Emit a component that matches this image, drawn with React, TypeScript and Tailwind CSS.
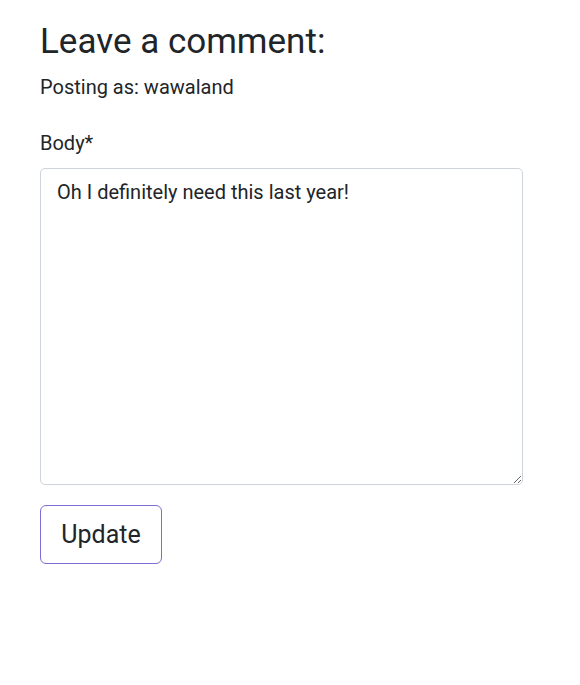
export default function App() {
  return (
    <div className="min-h-screen bg-white px-10 pt-[21px] font-['Roboto',sans-serif] text-[#212529]">
      <h2 className="text-[35px] leading-[1.2] font-normal">Leave a comment:</h2>
      <p className="mt-[9px] text-[20px] leading-[1.5]">Posting as: wawaland</p>

      <form className="mt-[26px] w-[483px]">
        <label className="block text-[20px] leading-[1.5]">Body*</label>
        <textarea
          className="mt-[10px] block h-[317px] w-full rounded-[5px] border border-[#ced4da] px-4 py-[8px] text-[20px] leading-[1.5] text-[#212529] outline-none"
          defaultValue="Oh I definitely need this last year!"
        />
        <button
          type="button"
          className="mt-5 h-[59px] w-[122px] rounded-[6px] border border-[#7d6bd6] bg-white text-[25px] text-[#212529]"
        >
          Update
        </button>
      </form>
    </div>
  );
}
